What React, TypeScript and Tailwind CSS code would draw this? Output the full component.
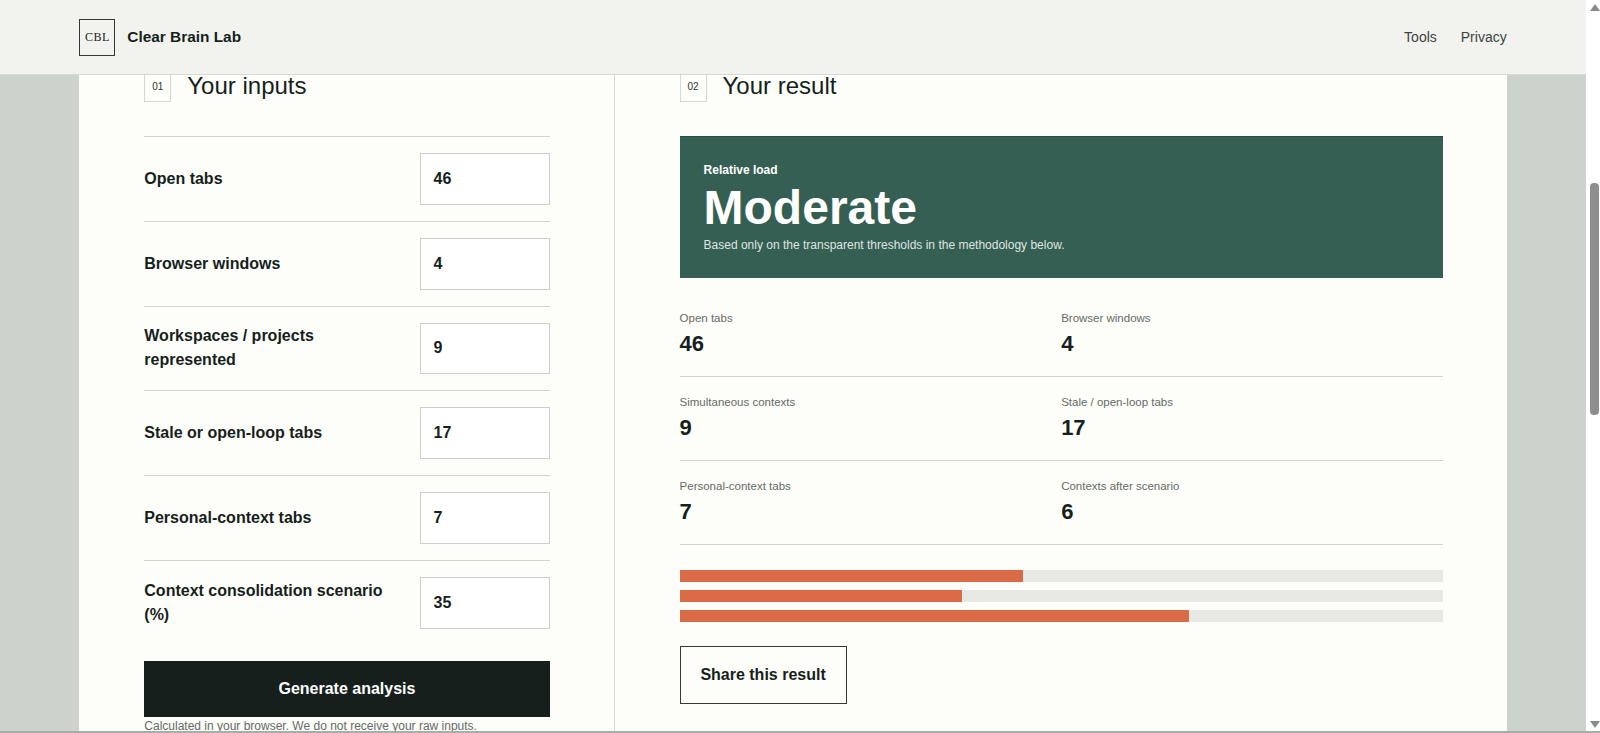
const inputs = [
  { label: 'Open tabs', value: '46' },
  { label: 'Browser windows', value: '4' },
  { label: 'Workspaces / projects represented', value: '9' },
  { label: 'Stale or open-loop tabs', value: '17' },
  { label: 'Personal-context tabs', value: '7' },
  { label: 'Context consolidation scenario (%)', value: '35' },
];

const stats = [
  [
    { label: 'Open tabs', value: '46' },
    { label: 'Browser windows', value: '4' },
  ],
  [
    { label: 'Simultaneous contexts', value: '9' },
    { label: 'Stale / open-loop tabs', value: '17' },
  ],
  [
    { label: 'Personal-context tabs', value: '7' },
    { label: 'Contexts after scenario', value: '6' },
  ],
];

const bars = [45, 37, 66.7];

function SectionTitle({ num, title }: { num: string; title: string }) {
  return (
    <div className="-mt-[5px] mb-[34px] flex h-[32px] items-center gap-4">
      <div className="flex h-[32px] w-[27px] items-center justify-center border border-[#d5d8d3] text-[10px] text-[#333]">
        {num}
      </div>
      <h2 className="text-[24px] leading-[22px] font-normal text-[#161f1c]">{title}</h2>
    </div>
  );
}

function Scrollbar() {
  return (
    <div className="relative w-[14px] shrink-0 bg-white">
      <div className="absolute top-[4px] left-[4px] h-0 w-0 border-x-[5px] border-b-[7px] border-x-transparent border-b-[#8a8a8a]" />
      <div className="absolute top-[183px] left-[4px] h-[232px] w-[9px] rounded-t-[4px] rounded-b-[4px] bg-[#8e8e8e]" />
      <div className="absolute top-[721px] left-[4px] h-0 w-0 border-x-[5px] border-t-[7px] border-x-transparent border-t-[#8a8a8a]" />
    </div>
  );
}

export default function App() {
  return (
    <div className="relative flex h-[733px] overflow-hidden font-['Liberation_Sans',Arial,sans-serif] text-[#161f1c]">
      <div className="flex min-w-0 flex-1 flex-col bg-[#ccd3cd]">
        {/* Header */}
        <header className="z-10 h-[75px] shrink-0 border-b border-[#d8d9d3] bg-[#f2f3ee]">
          <div className="mx-auto flex h-full w-[90%] items-center justify-between">
            <div className="flex items-center gap-3">
              <div className="flex h-[37px] w-[36px] items-center justify-center border border-[#333a36] font-['Liberation_Serif',serif] text-[12px] tracking-[0.5px]">
                CBL
              </div>
              <span className="text-[15.4px] font-bold">Clear Brain Lab</span>
            </div>
            <nav className="flex items-center gap-6 text-[14px] text-[#3c4340]">
              <span>Tools</span>
              <span>Privacy</span>
            </nav>
          </div>
        </header>

        {/* Tool card */}
        <main className="mx-auto grid h-[658px] w-[90%] grid-cols-[3fr_5fr] bg-[#fdfdf9]">
          <section className="border-r border-[#d5d8d3] pr-16 pl-[65px]">
            <SectionTitle num="01" title="Your inputs" />
            <div>
              {inputs.map((input) => (
                <div
                  key={input.label}
                  className="flex items-center justify-between gap-6 border-t border-[#d0d3ce] py-4"
                >
                  <label className="text-[16px] leading-[24px] font-bold">{input.label}</label>
                  <div className="flex h-[51.8px] w-[130px] shrink-0 items-center border border-[#ccd0cb] bg-white pl-[13px] text-[16px] font-bold">
                    {input.value}
                  </div>
                </div>
              ))}
            </div>
            <button className="mt-[16px] h-[56px] w-full bg-[#161f1c] text-[16px] font-bold text-white">
              Generate analysis
            </button>
            <p className="mt-[1px] text-[12px] leading-[16px] text-[#666b68]">
              Calculated in your browser. We do not receive your raw inputs.
            </p>
          </section>

          <section className="min-w-0 pr-16 pl-[65px]">
            <SectionTitle num="02" title="Your result" />
            <div className="h-[142px] border-t border-[#1f4f40] bg-[#355f52] px-6 pt-[25px] text-white">
              <div className="text-[12px] leading-[16px] font-bold">Relative load</div>
              <div className="mt-[4px] text-[48px] leading-[52px] font-bold">Moderate</div>
              <div className="mt-[3px] text-[12px] leading-[16px] text-[#dfe5e1]">
                Based only on the transparent thresholds in the methodology below.
              </div>
            </div>

            <div className="mt-[15px]">
              {stats.map((row) => (
                <div key={row[0].label} className="grid h-[84px] grid-cols-2 border-b border-[#d0d3ce] pt-[17px]">
                  {row.map((stat) => (
                    <div key={stat.label}>
                      <div className="text-[11.5px] leading-[16px] text-[#666b68]">{stat.label}</div>
                      <div className="mt-[4px] text-[22px] leading-[28px] font-bold">{stat.value}</div>
                    </div>
                  ))}
                </div>
              ))}
            </div>

            <div className="mt-[25px] flex flex-col gap-2">
              {bars.map((pct) => (
                <div key={pct} className="h-[12px] bg-[#e7e7e3]">
                  <div className="h-full bg-[#d96b47]" style={{ width: `${pct}%` }} />
                </div>
              ))}
            </div>

            <button className="mt-[24px] h-[58px] w-[167px] border border-[#333a36] text-[16px] font-bold">
              Share this result
            </button>
          </section>
        </main>
      </div>
      <Scrollbar />
      <div className="absolute inset-x-0 bottom-0 h-[2px] bg-[#a9aca8]" />
    </div>
  );
}
